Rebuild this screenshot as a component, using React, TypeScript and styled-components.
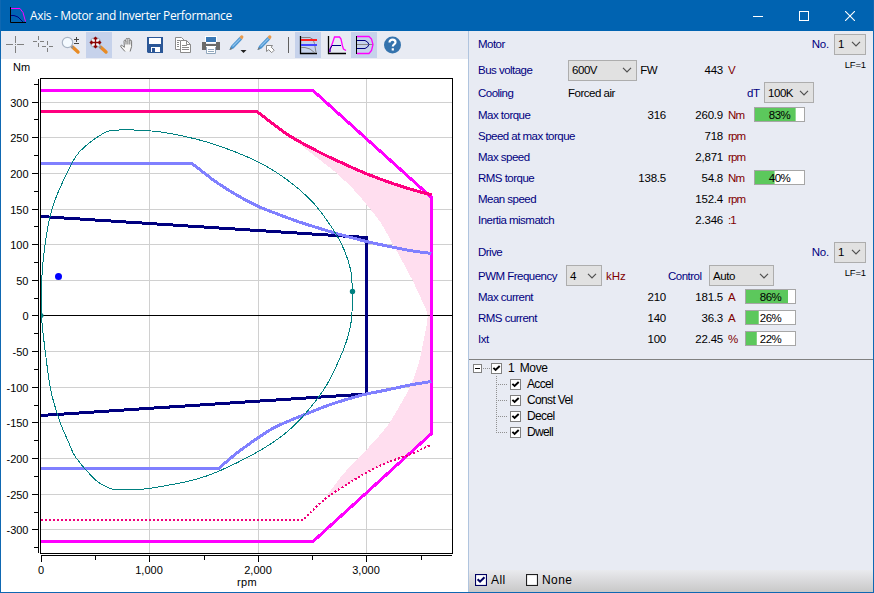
import React from 'react';
import styled, { createGlobalStyle } from 'styled-components';

const Global = createGlobalStyle`
  * { box-sizing: border-box; }
  html, body { margin: 0; padding: 0; overflow: hidden; }
  svg { display: block; }
`;

const Window = styled.div`
  width: 874px;
  height: 593px;
  display: flex;
  flex-direction: column;
  background: #e8ebf3;
  border: 1px solid #0f68b2;
  border-top: 0;
  font-family: "Liberation Sans", Arial, sans-serif;
  font-size: 12px;
  color: #000;
`;

const TitleBar = styled.header`
  height: 31px;
  flex: none;
  display: flex;
  align-items: center;
  background: #0063b1;
  color: #fff;
  padding-left: 7px;
`;

const Title = styled.h1`
  margin: 0 0 0 3px;
  flex: 1;
  font: 400 12px "Open Sans", "Noto Sans", sans-serif;
  letter-spacing: -0.35px;
  white-space: nowrap;
`;

const WindowButton = styled.button`
  width: 46px;
  height: 30px;
  display: grid;
  place-items: center;
  padding: 0;
  border: 0;
  background: none;
`;

const Main = styled.main`
  flex: 1;
  display: flex;
  min-height: 0;
`;

const ChartPane = styled.section`
  width: 467px;
  background: #fff;
`;

const Toolbar = styled.nav`
  height: 28px;
  display: flex;
  align-items: center;
  background: #e8ebf3;
`;

const Tool = styled.button<{ $active?: boolean }>`
  width: 26px;
  height: 26px;
  margin: 0 1px;
  padding: 0;
  border: 0;
  display: grid;
  place-items: center;
  background: ${p => (p.$active ? '#c6d2eb' : 'transparent')};
`;

const ToolDivider = styled.i`
  width: 1px;
  height: 16px;
  margin: 0 5px 0 7px;
  background: #606060;
`;

const Side = styled.aside`
  flex: 1;
  display: flex;
  flex-direction: column;
  border-left: 1px solid #b0c4de;
`;

const Readouts = styled.div`
  height: 329px;
  border-bottom: 1px solid #808080;
  font-size: 11.5px;
  letter-spacing: -0.22px;
  white-space: nowrap;
`;

const Row = styled.div<{ $h?: number; $gap?: number }>`
  height: ${p => p.$h ?? 21}px;
  margin-top: ${p => p.$gap ?? 0}px;
  padding: 0 7px 0 9px;
  display: flex;
  align-items: center;
`;

const Label = styled.span<{ $w?: number; $right?: boolean }>`
  color: #000080;
  flex: none;
  letter-spacing: -0.52px;
  ${p => (p.$w ? `width: ${p.$w}px;` : '')}
  ${p => (p.$right ? 'margin-left: auto; padding-right: 5px; letter-spacing: -0.22px;' : '')}
`;

const Value = styled.span<{ $w: number }>`
  flex: none;
  width: ${p => p.$w}px;
  text-align: right;
`;

const Text = styled.span<{ $w: number }>`
  flex: none;
  width: ${p => p.$w}px;
  letter-spacing: -0.5px;
`;

const Unit = styled.span<{ $w?: number }>`
  flex: none;
  width: ${p => p.$w ?? 26}px;
  margin-left: 5px;
  letter-spacing: -0.9px;
  color: #800000;
`;

const KiloUnit = styled(Unit)`
  margin-left: 4px;
  letter-spacing: 0;
`;

const SelectBox = styled.button<{ $w: number }>`
  flex: none;
  width: ${p => p.$w}px;
  height: 21px;
  padding: 0 4px 0 3px;
  display: flex;
  align-items: center;
  justify-content: space-between;
  font: inherit;
  letter-spacing: -0.45px;
  color: #000;
  background: #e1e1e1;
  border: 1px solid #adadad;
`;

const Factor = styled.span`
  align-self: flex-start;
  margin-left: auto;
  font-size: 9.5px;
  letter-spacing: -0.15px;
  line-height: 15px;
`;

const Meter = styled.div<{ $pct: number }>`
  width: 51px;
  height: 15px;
  border: 1px solid #a6a6a6;
  text-align: center;
  line-height: 14px;
  letter-spacing: -0.5px;
  background: linear-gradient(#5cc85c, #5cc85c) 0 0 / ${p => p.$pct}% 100% no-repeat #fff;
`;

const Tree = styled.div`
  flex: 1;
`;

const TreeItem = styled.div<{ $child?: boolean }>`
  height: 16px;
  display: flex;
  align-items: center;
  padding-left: ${p => (p.$child ? 27 : 4)}px;
  font-size: 12px;
  letter-spacing: -0.65px;
  white-space: pre;
`;

const Branch = styled.span<{ $last?: boolean }>`
  width: 12px;
  height: 16px;
  margin-right: 2px;
  background:
    repeating-linear-gradient(#909090 0 1px, transparent 1px 2px) 0 0 / 1px ${p => (p.$last ? 8 : 16)}px no-repeat,
    repeating-linear-gradient(90deg, #909090 0 1px, transparent 1px 2px) 0 8px / 11px 1px no-repeat;
`;

const RootBranch = styled.span`
  width: 7px;
  height: 1px;
  margin: 0 1px;
  background: repeating-linear-gradient(90deg, #909090 0 1px, transparent 1px 2px);
`;

const ItemText = styled.span`
  margin-left: 6px;
`;

const RootText = styled(ItemText)`
  letter-spacing: -0.35px;
  word-spacing: -0.3px;
`;

const Footer = styled.footer`
  height: 22px;
  display: flex;
  align-items: center;
  padding: 0 6px 2px;
  background: linear-gradient(#e9eaee, #c8c8c8);
  font-size: 12px;
  letter-spacing: 0.4px;
`;

const FooterText = styled.span<{ $w: number }>`
  width: ${p => p.$w}px;
  margin-left: 4px;
`;

const ChevronDown = () => (
  <svg width="10" height="6" viewBox="0 0 10 6"><path d="M1 .8 5 4.8 9 .8" fill="none" stroke="#505050" strokeWidth="1.2" /></svg>
);

const Select = ({ w, children }: { w: number; children: React.ReactNode }) => (
  <SelectBox $w={w}><span>{children}</span><ChevronDown /></SelectBox>
);

const Check = ({ size = 11, stroke = '#808080', on = true }: { size?: number; stroke?: string; on?: boolean }) => (
  <svg width={size} height={size} viewBox="0 0 11 11">
    <rect x=".5" y=".5" width="10" height="10" fill="#fff" stroke={stroke} />
    {on && <path d="M2.4 4.8 4.6 7 8.7 3" fill="none" stroke={stroke === '#808080' ? '#000' : stroke} strokeWidth="1.9" />}
  </svg>
);

const Icon = ({ children }: { children: React.ReactNode }) => (
  <svg width="26" height="26" viewBox="1 1 26 26">{children}</svg>
);

const Lens = () => (
  <g>
    <path d="M15.500 16 21 21" stroke="#e88b24" strokeWidth="3.4" strokeLinecap="round" />
    <path d="m14 15 2 2" stroke="#8b8f9a" strokeWidth="2" />
    <circle cx="10.5" cy="11.5" r="5.2" fill="#f4faff" stroke="#a9b4c4" strokeWidth="1.2" />
  </g>
);

const Pencil = () => (
  <g>
    <path d="m4.500 19 1.500-4L14.500 6l2.600 2.600-8.600 9z" fill="#4b94d0" />
    <path d="m7.500 15.500 8-8" stroke="#8fc3ec" strokeWidth="1.1" />
    <path d="m14.500 6 1.400-1.400q1-.8 2 .2t.3 2L17.100 8.600z" fill="#e79a4d" />
    <path d="m4.500 19 1-2.800 1.800 1.800z" fill="#777" />
  </g>
);

const tools: Record<string, React.ReactNode> = {
  cross: <path d="M5 13.5h7m4 0h7M14.500 5v7m0 3v7M14 13.5h1" stroke="#808080" fill="none" />,
  crosses: <path d="M4 10.500h4m3 0h4M9.500 5v4m0 3v4M13 15.500h4m3 0h4M18.500 10v4m0 3v4" stroke="#808080" fill="none" />,
  zoom: <><Lens /><path d="M17 8.500h5M19.500 6v5M17 12.500h5" stroke="#444" /></>,
  pan: <><Lens /><path d="M5.500 11.500h10M10.500 6.500v10M7.200 9.700l-1.800 1.800 1.800 1.800m6.600-3.600 1.800 1.800-1.800 1.800M8.700 8.200l1.800-1.800 1.800 1.800m-3.600 6.600 1.800 1.800 1.800-1.800" stroke="#8b0000" strokeWidth="1.3" fill="none" /></>,
  hand: <path d="m12 20.500-4-4.500c-1-1.600.4-2.300 1.400-1.300l2 1.600-.4-6c0-1.400 1.500-1.400 1.700 0l.3-2c.2-1.300 1.700-1.300 1.800 0l.2-.2c.3-1.200 1.700-1 1.800.2v1.500c.3-1.100 1.700-.9 1.800.3V15.500l-1.500 5M13 10v3.500m1.900-5v5m1.900-4v4" fill="#f6f6f6" stroke="#777" />,
  save: <><path d="M6 6h16v16H7l-1-1z" fill="#2b5797" /><path d="M8 7h12v6H8z" fill="#fff" /><path d="M10 16h9v5h-9z" fill="#fff" /><path d="M11 17h3v4h-3z" fill="#2b5797" /></>,
  copy: <g fill="#fff" stroke="#8b8b8b"><path d="M6.500 6.500h6l3 3v9h-9z" /><path d="M11.500 9.500h6l4 4v8h-10z" /><path d="M17.500 9.500v4h4M13 14.500h5m-5 2h7m-7 2h7M8 9.500h3m-3 2h2m-2 2h2m-2 2h2" fill="none" /></g>,
  print: <><path d="M8 5h12v7H8z" fill="#fff" /><path d="M9 6h10v5H9z" fill="#3a78b5" /><path d="M5 11h4v2h10v-2h4v8H5z" fill="#6b6b6b" /><path d="M9 15h10v8H9z" fill="#fff" /><path d="M9.500 16v6.500h9V16M11 18.500h6m-6 2h6" fill="none" stroke="#91a7bd" /></>,
  pencil: <><Pencil /><path d="M15.500 19h6l-3 3z" fill="#222" /></>,
  pencilPick: <><Pencil /><path d="M13.500 14.500h6l-1.300 1.700 3 3-2.500 2.500-3-3-2.200 1.800z" fill="#fff" stroke="#888" /></>,
  limits: <><path d="M6.500 5v17.500H23" stroke="#000" fill="none" strokeWidth="1.3" /><path d="M7 6.500h9l3 2 1.500 4 1.500 9M7 16.500h4l5 1.500 5 4" stroke="#858585" fill="none" /><path d="M7 9h16" stroke="#ff2020" strokeWidth="2" /><path d="M7 14h16" stroke="#4545ff" strokeWidth="2" /></>,
  speed: <><path d="M6.500 5v17.500H24" stroke="#000" fill="none" strokeWidth="1.3" /><path d="M7.500 21c1-5 2-5.500 4-12l1-3h5l1.500 2 1.500 7 1 3 2.500 1.500" stroke="#f0f" strokeWidth="1.3" fill="none" /><path d="M8 21V18l2-3.500h9" stroke="#000080" fill="none" /></>,
  quadrant: <><path d="M6.500 5v18" stroke="#000" /><path d="M7 13.500h16" stroke="#888" /><path d="M7 5.500h12l2.500 2.500 1.500 5.500-1.500 6-2.500 3H7" stroke="#f0f" fill="none" strokeWidth="1.3" /><path d="M7 9.500h8l2.500 1.500 1.500 2.500-1.500 2.500-2.500 1.500H7" stroke="#000080" fill="none" /></>,
  help: <><circle cx="14.500" cy="14" r="8.500" fill="#3573ad" /><path d="M11.500 11.500c0-4 6-3.600 6-.3 0 2.200-2.700 2.200-2.700 4.200M14.800 17.200v2.300" stroke="#fff" strokeWidth="2.200" fill="none" /></>,
};

const toolOrder = ['cross', 'crosses', 'zoom', 'pan', 'hand', 'save', 'copy', 'print', 'pencil', 'pencilPick', '|', 'limits', 'speed', 'quadrant', 'help'];
const activeTools = ['pan', 'limits', 'quadrant'];

/* Chart geometry: plot frame with nominal tick positions in pixels. */
const yMajor = [102, 137, 173, 209, 244, 280, 315, 351, 387, 422, 458, 494, 529];
const yMinor = [84, 119, 155, 191, 226, 262, 298, 333, 369, 405, 440, 476, 512, 547];
const xMajor = [41, 149, 258, 366];
const xMinor = [95, 204, 312, 421];

/* Catmull-Rom spline through "x,y x,y ..." as cubic segments. */
const smooth = (points: string) => {
  const p = points.split(' ').map(s => s.split(',').map(Number));
  const at = (i: number) => p[Math.max(0, Math.min(p.length - 1, i))];
  let d = '';
  for (let i = 0; i < p.length - 1; i++) {
    const [a, b, c, e] = [at(i - 1), at(i), at(i + 1), at(i + 2)];
    d += `C${b[0] + (c[0] - a[0]) / 6} ${b[1] + (c[1] - a[1]) / 6} ${c[0] - (e[0] - b[0]) / 6} ${c[1] - (e[1] - b[1]) / 6} ${c[0]} ${c[1]}`;
  }
  return d;
};

const limitTop = '257,111.5 288.3,135 320,152.5 343.3,163.5 366.3,173.7 393.3,183.7 416.7,191 431.5,194.7';
const ratedTop = '192,163.5 213.3,180 226.7,189 243.3,198.7 258.3,206.5 276.7,213.7 298.3,221.7 320,228.5 340,234.5 366.5,241.5 380,244.5 410,250.5 431.5,253.5';
const ratedBottom = '218.5,468.5 240,450.7 270,430 290,420.5 306.7,413.7 330,404.7 353,397.5 366.5,394 386.7,390 410,385 431.5,381.5';
const limitBottom = '302.5,520 326.7,497.7 350,482.5 366.3,472.7 386.7,462.7 410,454.5 431.5,444.5';
const cycleUpper = '41.5,311 42,275 45.7,240 51.3,211.5 59.3,189.5 75,157.7 87.3,144.5 100,135.5 111.7,130.5 146,130.5 173.3,134 213.3,144 258.3,162 286.7,179.5 310,199.3 326.7,220 341,243 350.3,268.5 352.5,291.5';
const cycleLower = '352.5,291.5 352,311.7 350,328.5 343.3,350 326.7,385 303.3,416 283.3,435 258.3,451.5 218.3,471.5 193.3,480 160,486.7 138.3,489.5 115,489.5 106.7,486.7 95,479.5 76,457.7 68.3,441.7 59.3,420 50.7,390 45.7,355 42,323 41.5,311';
const regionEdge = '326.7,496 343.3,474 366.3,450 386.7,426.7 399,407 406.7,393.3 415,375 420.7,355 425,333.3 427.5,315.5 421.7,300 412.7,280.7 401.7,260 393.3,245 380,221.7 366.3,204.3 355,191 336.7,173.3 310,152.3 288.3,135';

const Chart = () => (
  <svg width="467" height="533" viewBox="1 59 467 533" fontFamily="Liberation Sans, Arial, sans-serif" fontSize="11">
    <g shapeRendering="crispEdges" strokeWidth="1">
      <path d={yMajor.map(y => `M41 ${y + 0.5}H452`).join('') + xMajor.slice(1).map(x => `M${x + 0.5} 79V553`).join('')} stroke="#d0d0d0" />
      <path
        d={`M288.3 135L320 152.500 343.300 163.500 366.300 173.700 393.300 183.700 416.700 191 430 195V435L408 454 386.700 462.700 366.300 472.700 350 482.300 326.700 496${smooth(regionEdge)}z`}
        fill="#ffdeef"
      />
      <path d="M41 315.5H452" stroke="#000" />
      <rect x="40.5" y="78.5" width="412" height="475" fill="none" stroke="#000" />
      <path
        d={'M38.5 79V553M41 555.5H452'
          + yMajor.map(y => `M32 ${y + 0.5}h6`).join('') + yMinor.map(y => `M34 ${y + 0.5}h4`).join('')
          + xMajor.map(x => `M${x + 0.5} 556v6`).join('') + xMinor.map(x => `M${x + 0.5} 556v4`).join('')}
        stroke="#000"
      />
    </g>
    <g fill="none" strokeWidth="3" shapeRendering="crispEdges">
      <path d="M41 216.5 366.5 237.5V394L41 415.5" stroke="#000080" />
      <path d="M41 90.5H313L431.5 197.5V433.5L313 541.5H41" stroke="#f0f" />
      <path d={`M41 111.5H257${smooth(limitTop)}`} stroke="#ff007f" />
      <path d={`M41 163.5H192${smooth(ratedTop)}`} stroke="#8080ff" />
      <path d={`M41 468.5H218.5${smooth(ratedBottom)}`} stroke="#8080ff" />
      <path d={`M41 520H302.5${smooth(limitBottom)}`} stroke="#f0007c" strokeWidth="2" strokeDasharray="2 2" />
      <path d={`M41.5 311${smooth(cycleUpper)}${smooth(cycleLower)}`} stroke="#008080" strokeWidth="1" />
    </g>
    <circle cx="58.5" cy="276.5" r="3.5" fill="#00f" />
    <circle cx="352.5" cy="291.5" r="2.7" fill="#008080" />
    <path d="M41 313a2.500 2.500 0 0 1 0 5z" fill="#008080" />
    <text x="13" y="71">Nm</text>
    {yMajor.map((y, i) => <text key={y} x="28.5" y={y + 4.5} textAnchor="end">{300 - i * 50}</text>)}
    {xMajor.map((x, i) => <text key={x} x={x} y="574" textAnchor="middle">{i ? `${i},000` : '0'}</text>)}
    <text x="247" y="586" textAnchor="middle" letterSpacing=".3">rpm</text>
  </svg>
);

type Reading = [label: string, rated: string, value: string, unit: string, pct?: number];

const motor: Reading[] = [
  ['Max torque', '316', '260.9', 'Nm', 83],
  ['Speed at max torque', '', '718', 'rpm'],
  ['Max speed', '', '2,871', 'rpm'],
  ['RMS torque', '138.5', '54.8', 'Nm', 40],
  ['Mean speed', '', '152.4', 'rpm'],
  ['Inertia mismatch', '', '2.346', ':1'],
];

const drive: Reading[] = [
  ['Max current', '210', '181.5', 'A', 86],
  ['RMS current', '140', '36.3', 'A', 26],
  ['Ixt', '100', '22.45', '%', 22],
];

const ReadingRow = ({ data: [label, rated, value, unit, pct], unitWidth, gap }: { data: Reading; unitWidth?: number; gap?: number }) => (
  <Row $gap={gap}>
    <Label $w={110}>{label}</Label>
    <Value $w={78}>{rated}</Value>
    <Value $w={57}>{value}</Value>
    <Unit $w={unitWidth}>{unit}</Unit>
    {pct !== undefined && <Meter $pct={pct}>{pct}%</Meter>}
  </Row>
);

export default function App() {
  return (
    <Window>
      <Global />
      <TitleBar>
        <svg width="19" height="17" viewBox="0 0 19 17">
          <path d="M2.5 0v15.5H18" stroke="#000" fill="none" />
          <path d="M3 1.5h9l3 4 2.500 9" stroke="#f0f" fill="none" />
          <path d="M3 8.5h3l4 1.500 5 5" stroke="#000080" fill="none" />
        </svg>
        <Title>Axis - Motor and Inverter Performance</Title>
        <WindowButton aria-label="Minimize"><svg width="10" height="10"><path d="M0 5.5h10" stroke="#fff" /></svg></WindowButton>
        <WindowButton aria-label="Maximize"><svg width="10" height="10"><rect x=".5" y=".5" width="9" height="9" fill="none" stroke="#fff" /></svg></WindowButton>
        <WindowButton aria-label="Close"><svg width="10" height="10"><path d="m0 0 10 10M10 0 0 10" stroke="#fff" strokeWidth="1.1" /></svg></WindowButton>
      </TitleBar>
      <Main>
        <ChartPane>
          <Toolbar>
            {toolOrder.map(name => name === '|'
              ? <ToolDivider key={name} />
              : <Tool key={name} aria-label={name} $active={activeTools.includes(name)}><Icon>{tools[name]}</Icon></Tool>)}
          </Toolbar>
          <Chart />
        </ChartPane>
        <Side>
          <Readouts>
            <Row $h={26}>
              <Label>Motor</Label>
              <Label $right>No.</Label>
              <Select w={32}>1</Select>
            </Row>
            <Row $h={26}>
              <Label $w={90}>Bus voltage</Label>
              <Select w={69}>600V</Select>
              <Text $w={30}>&nbsp;&#8202;FW</Text>
              <Value $w={56}>443</Value>
              <Unit>V</Unit>
              <Factor>LF=1</Factor>
            </Row>
            <Row $h={19}>
              <Label $w={90}>Cooling</Label>
              <Text $w={179}>Forced air</Text>
              <Label $w={17}>dT</Label>
              <Select w={50}>100K</Select>
            </Row>
            {motor.map((r, i) => <ReadingRow key={r[0]} data={r} gap={i ? 0 : 2} />)}
            <Row $h={26} $gap={9}>
              <Label>Drive</Label>
              <Label $right>No.</Label>
              <Select w={32}>1</Select>
            </Row>
            <Row>
              <Label $w={88}>PWM Frequency</Label>
              <Select w={36}>4</Select>
              <KiloUnit $w={62}>kHz</KiloUnit>
              <Label $w={41}>Control</Label>
              <Select w={65}>Auto</Select>
              <Factor>LF=1</Factor>
            </Row>
            {drive.map(r => <ReadingRow key={r[0]} data={r} unitWidth={17} />)}
          </Readouts>
          <Tree>
            <TreeItem>
              <svg width="9" height="9"><rect x=".5" y=".5" width="8" height="8" fill="#fff" stroke="#808080" /><path d="M2 4.5h5" stroke="#000" /></svg>
              <RootBranch />
              <Check />
              <RootText>1  Move</RootText>
            </TreeItem>
            {['Accel', 'Const Vel', 'Decel', 'Dwell'].map((t, i) => (
              <TreeItem key={t} $child>
                <Branch $last={i === 3} />
                <Check />
                <ItemText>{t}</ItemText>
              </TreeItem>
            ))}
          </Tree>
          <Footer>
            <Check size={12} stroke="#000060" />
            <FooterText $w={35}>All</FooterText>
            <Check size={12} stroke="#202020" on={false} />
            <FooterText $w={40}>None</FooterText>
          </Footer>
        </Side>
      </Main>
    </Window>
  );
}
